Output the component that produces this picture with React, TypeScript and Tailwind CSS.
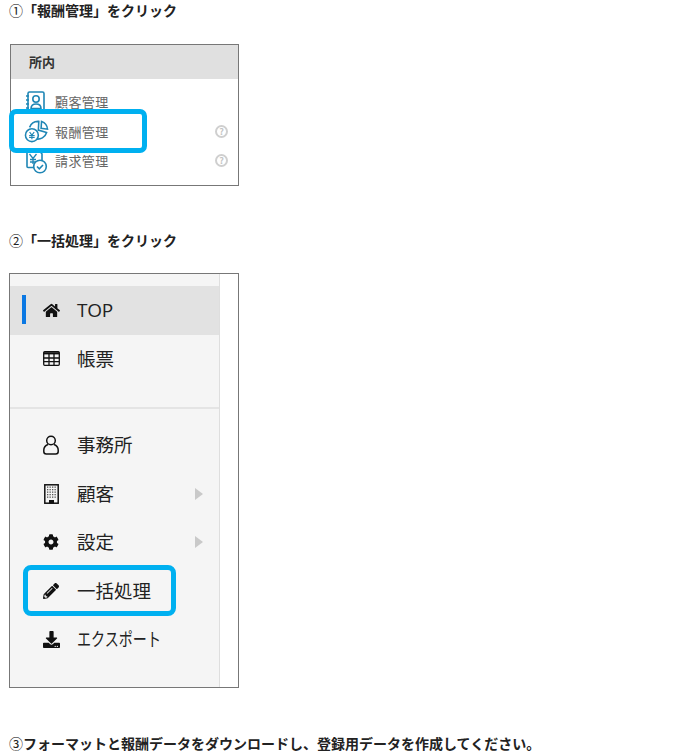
import React from "react";
import { FaHome, FaCog, FaPencilAlt, FaDownload } from "react-icons/fa";

const font = "font-['Meiryo','Noto_Sans_CJK_JP','Noto_Sans',sans-serif]";

function Heading({ num, children, className = "" }: { num: string; children: React.ReactNode; className?: string }) {
  return (
    <p className={`text-[14px] leading-[20px] font-bold text-[#222] pl-[9px] ${className}`}>
      <span className="font-normal">{num}</span>
      {children}
    </p>
  );
}

function Help() {
  return (
    <span className="ml-auto mr-[10px] w-[13px] h-[13px] rounded-full border-2 border-[#cfcfcf] text-[#c4c4c4] text-[9px] leading-[9px] font-bold flex items-center justify-center">?</span>
  );
}

const blue = "#1f86b5";

function ContactIcon() {
  return (
    <svg width="22" height="24" viewBox="1 0 22 24" fill="none" stroke={blue} strokeWidth="1.600">
      <rect x="4" y="2" width="16" height="20" rx="1.500" />
      <circle cx="12" cy="9" r="3.200" />
      <path d="M7 18.500c0-3.200 2-4.500 5-4.500s5 1.300 5 4.500z" />
      <path d="M2 6h3M2 10h3M2 14h3M2 18h3" />
    </svg>
  );
}

function PieIcon() {
  return (
    <svg width="25" height="23" viewBox="0 0 27 25" fill="none" stroke={blue} strokeWidth="1.700">
      <path d="M6 8a10 10 0 0 1 10-6.500L15.500 11l9 2.500a10 10 0 0 1-12 7" />
      <path d="M19 1.500a10 10 0 0 1 6.500 8.500L18.500 9z" />
      <circle cx="8.500" cy="16.500" r="7" fill="#fff" />
      <path d="M6 13 8.500 16.500 11 13M8.500 16.500V21M5.500 17h6M5.500 19h6" strokeWidth="1.200" />
    </svg>
  );
}

function BillIcon() {
  return (
    <svg width="24" height="26" viewBox="0 0 24 26" fill="none" stroke={blue} strokeWidth="1.600">
      <path d="M3 0v18.500a1 1 0 0 0 1 1h8" />
      <path d="M15 2l3 4v6" />
      <path d="M5.500 6 9 10.500 12.500 6M9 10.500V16M6 11.500h6M6 14h6" strokeWidth="1.300" />
      <circle cx="16" cy="18.500" r="6.300" fill="#fff" />
      <path d="M13 18.500l2.300 2.300 3.700-3.800" />
    </svg>
  );
}

function UserIcon() {
  return (
    <svg width="16" height="20" viewBox="0 0 16 20" fill="none" stroke="#111" strokeWidth="1.500">
      <circle cx="8" cy="5.500" r="4.300" />
      <path d="M5 9.500C2.500 10.500.8 12.500.8 15v1.500c0 1.500 1 2.500 2.500 2.500h9.400c1.500 0 2.500-1 2.500-2.500V15c0-2.500-1.700-4.500-4.200-5.500" />
    </svg>
  );
}

function TableIcon() {
  return (
    <svg width="17" height="15" viewBox="0 0 17 15" fill="none" stroke="#111" strokeWidth="1.300">
      <rect x=".7" y=".7" width="15.600" height="13.600" rx="1" />
      <path d="M.7 2.300h15.600" strokeWidth="2.200" />
      <path d="M.7 7h15.600M.7 10.700h15.600M6 2v12M11 2v12" />
    </svg>
  );
}

function BuildingIcon() {
  const dots: React.ReactNode[] = [];
  for (let r = 0; r < 5; r++) {
    for (let c = 0; c < 4; c++) {
      dots.push(<rect key={`${r}-${c}`} x={3 + c * 2.500} y={2.500 + r * 2.500} width="1.300" height="1.300" fill="#555" />);
    }
  }
  return (
    <svg width="15" height="20" viewBox="0 0 15 20" fill="none">
      <rect x=".8" y=".8" width="13.400" height="18.400" stroke="#111" strokeWidth="1.500" />
      {dots}
      <rect x="5" y="16" width="5" height="3.500" fill="#111" />
    </svg>
  );
}

function Caret() {
  return (
    <svg width="8" height="12" viewBox="0 0 8 12" className="ml-auto mr-[16px]">
      <path d="M0 0l8 6-8 6z" fill="#c9c9c9" />
    </svg>
  );
}

function SmallRow({ icon, label, help }: { icon: React.ReactNode; label: string; help?: boolean }) {
  return (
    <div className="h-[29.500px] flex items-center">
      <div className="w-[44px] flex justify-center pl-[6px]">{icon}</div>
      <span className="text-[13px] text-[#666] tracking-[0.4px]">{label}</span>
      {help && <Help />}
    </div>
  );
}

function NavRow({ icon, label, caret, narrow, latin }: { icon: React.ReactNode; label: string; caret?: boolean; narrow?: boolean; latin?: boolean }) {
  return (
    <div className="h-[48.500px] flex items-center">
      <div className="w-[33px] ml-[25px] mr-[9px] flex justify-center pr-[1px]">{icon}</div>
      <span
        className={`text-[18.500px] text-[#222] ${narrow ? "inline-block origin-left scale-x-[0.76]" : ""} ${latin ? "font-['Open_Sans',sans-serif] text-[19px] tracking-[-0.2px]" : ""}`}
      >
        {label}
      </span>
      {caret && <Caret />}
    </div>
  );
}

export default function App() {
  return (
    <div className={`w-[700px] h-[754px] overflow-hidden bg-white ${font}`}>
      <Heading num="①">「報酬管理」をクリック</Heading>

      <div className="relative mt-[24px] ml-[10px] w-[229px] h-[142px] border border-[#777] bg-white">
        <div className="h-[34px] bg-[#e0e0e0] flex items-center pl-[18px] text-[13px] font-bold text-[#333]">所内</div>
        <div className="pt-[8px]">
          <SmallRow icon={<ContactIcon />} label="顧客管理" />
          <SmallRow icon={<PieIcon />} label="報酬管理" help />
          <SmallRow icon={<BillIcon />} label="請求管理" help />
        </div>
        <div className="absolute left-[-2px] top-[64px] w-[138px] h-[44px] border-[5px] border-[#00b0f0] rounded-[7px]" />
      </div>

      <Heading num="②" className="mt-[44px]">「一括処理」をクリック</Heading>

      <div className="relative mt-[23px] ml-[9px] w-[230px] h-[415px] border border-[#777] bg-white">
        <div className="w-[210px] h-full bg-[#f5f5f5] border-r border-[#dedede] pt-[12px]">
          <div className="relative bg-[#e2e2e2]">
            <div className="absolute left-[12px] top-[9px] w-[4px] h-[29px] bg-[#0b78e3]" />
            <NavRow icon={<FaHome size={17} color="#111" />} label="TOP" latin />
          </div>
          <NavRow icon={<TableIcon />} label="帳票" />
          <div className="mt-[24px] mb-[12px] border-t-2 border-[#e4e4e4]" />
          <NavRow icon={<UserIcon />} label="事務所" />
          <NavRow icon={<BuildingIcon />} label="顧客" caret />
          <NavRow icon={<FaCog size={16} color="#111" />} label="設定" caret />
          <NavRow icon={<FaPencilAlt size={16} color="#111" />} label="一括処理" />
          <NavRow icon={<FaDownload size={17} color="#111" />} label="エクスポート" narrow />
        </div>
        <div className="absolute left-[13px] top-[291px] w-[153px] h-[51px] border-[5px] border-[#00b0f0] rounded-[8px]" />
      </div>

      <Heading num="③" className="mt-[45px]">フォーマットと報酬データをダウンロードし、登録用データを作成してください。</Heading>
    </div>
  );
}
